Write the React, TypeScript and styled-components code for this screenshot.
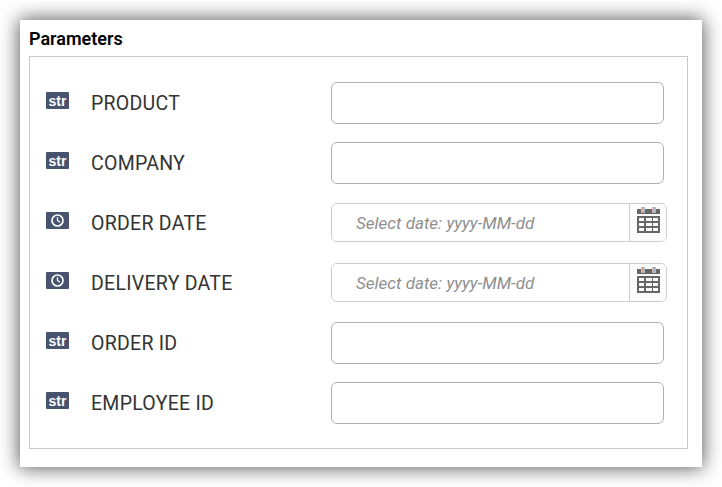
import React from "react";
import styled, { createGlobalStyle } from "styled-components";

const GlobalStyle = createGlobalStyle`
  *, *::before, *::after { box-sizing: border-box; }
  body { margin: 0; background: #fff; font-family: Roboto, sans-serif; }
`;

const Page = styled.main`
  width: 722px;
  height: 487px;
  padding: 20px;
  overflow: hidden;
`;

const Panel = styled.section`
  width: 682px;
  height: 447px;
  padding: 8px 14px 0 9px;
  background: #fff;
  box-shadow: 0 0 18px 1px rgba(0, 0, 0, 0.66);
`;

const Title = styled.h1`
  height: 28px;
  margin: 0;
  font-size: 18px;
  line-height: 22px;
  font-weight: 600;
  color: #000;
`;

const Fields = styled.div`
  height: 393px;
  padding: 16px 0 0 16px;
  border: 1px solid #c8c8c8;
`;

const Row = styled.div`
  display: grid;
  grid-template-columns: 45px 240px 1fr;
  align-items: start;
  height: 60px;
`;

const Badge = styled.span`
  display: flex;
  align-items: center;
  justify-content: center;
  width: 23px;
  height: 17px;
  margin-top: 19px;
  border-radius: 1px;
  background: #48546f;
  color: #fff;
  font: bold 14px/17px "Liberation Sans", Arial, sans-serif;
`;

const BadgeText = styled.span`
  padding-top: 1px;
`;

const Label = styled.label`
  font-size: 19.5px;
  line-height: 62px;
  font-weight: 400;
  letter-spacing: 0.27px;
  color: #333;
  white-space: nowrap;
`;

const TextInput = styled.input`
  width: 333px;
  height: 42px;
  margin-top: 9px;
  padding: 0 12px;
  border: 1px solid #b0b0b0;
  border-radius: 6px;
  background: #fff;
  outline: none;
  font: 17px Roboto, sans-serif;
`;

const DateField = styled.div`
  display: flex;
  width: 336px;
  height: 39px;
  margin-top: 10px;
  border: 1px solid #ccc;
  border-radius: 6px;
  overflow: hidden;
`;

const DateInput = styled.input`
  width: 297px;
  padding: 0 0 0 24px;
  border: 0;
  background: #fff;
  outline: none;
  font: italic 400 17px Roboto, sans-serif;
  letter-spacing: 0.02px;
  &::placeholder { color: #8e8e8e; opacity: 1; }
`;

const CalendarButton = styled.button`
  flex: 1;
  display: flex;
  padding: 3px 0 0 7px;
  border: 0;
  border-left: 1px solid #ccc;
  background: #fcfcfc;
`;

const ClockIcon = () => (
  <svg width="13" height="13" viewBox="0 0 13 13" fill="none" stroke="#fff">
    <circle cx="6.5" cy="6.5" r="5.5" strokeWidth="1.7" />
    <path d="M6.5 3.2v3.3l2.4 1.6" strokeWidth="1.3" />
  </svg>
);

const CalendarIcon = () => (
  <svg width="23" height="27" viewBox="0 0 23 27" fill="#666">
    <path d="M0 2h4v3.5h4V2h7v3.5h4V2h4v5H0z" />
    <path d="M4.6 0h1v5h-1zM15.6 0h1v5h-1z" fill="#b5653c" />
    <path d="M6.5 0h1v5h-1zM17.5 0h1v5h-1z" fill="#4a7fb4" />
    <path fillRule="evenodd" d="M0 9h23v17H0zM2 11v3h5v-3zM9 11v3h6v-3zM16 11v3h5v-3zM2 16v3h5v-3zM9 16v3h6v-3zM16 16v3h5v-3zM2 21v3h5v-3zM9 21v3h6v-3zM16 21v3h5v-3z" />
  </svg>
);

type Parameter = { id: string; name: string; kind: "str" | "date" };

const parameters: Parameter[] = [
  { id: "product", name: "PRODUCT", kind: "str" },
  { id: "company", name: "COMPANY", kind: "str" },
  { id: "order-date", name: "ORDER DATE", kind: "date" },
  { id: "delivery-date", name: "DELIVERY DATE", kind: "date" },
  { id: "order-id", name: "ORDER ID", kind: "str" },
  { id: "employee-id", name: "EMPLOYEE ID", kind: "str" },
];

const ParameterRow = ({ id, name, kind }: Parameter) => (
  <Row>
    <Badge>{kind === "str" ? <BadgeText>str</BadgeText> : <ClockIcon />}</Badge>
    <Label htmlFor={id}>{name}</Label>
    {kind === "str" ? (
      <TextInput id={id} />
    ) : (
      <DateField>
        <DateInput id={id} placeholder="Select date: yyyy-MM-dd" />
        <CalendarButton type="button" aria-label="Open calendar">
          <CalendarIcon />
        </CalendarButton>
      </DateField>
    )}
  </Row>
);

export default function App() {
  return (
    <>
      <GlobalStyle />
      <Page>
        <Panel>
          <Title>Parameters</Title>
          <Fields>
            {parameters.map((p) => (
              <ParameterRow key={p.id} {...p} />
            ))}
          </Fields>
        </Panel>
      </Page>
    </>
  );
}
